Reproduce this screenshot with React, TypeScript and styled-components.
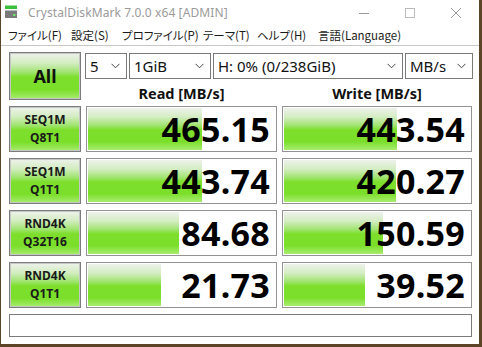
import React from "react";
import styled, { createGlobalStyle } from "styled-components";

const Global = createGlobalStyle`
  html, body { margin: 0; padding: 0; background: #5e4426; }
  body { width: 482px; height: 347px; overflow: hidden; }
  * { box-sizing: border-box; }
`;

const Window = styled.div`
  margin-left: 1px;
  width: 478px;
  height: 344px;
  background: #ffffff;
  display: flex;
  flex-direction: column;
  font-family: "Noto Sans", "Noto Sans CJK JP", sans-serif;
`;

const TitleBar = styled.div`
  height: 25px;
  display: flex;
  align-items: center;
  padding-left: 3px;
`;

const TitleText = styled.span`
  margin-left: 6px;
  font-size: 12px;
  color: #9a9a9a;
  flex: 1;
  letter-spacing: 0.1px;
`;

const WinButtons = styled.div`
  display: flex;
  height: 100%;
`;

const WinButton = styled.div`
  width: 46px;
  height: 100%;
  display: flex;
  align-items: center;
  justify-content: center;
`;

const MenuBar = styled.div`
  height: 21px;
  display: flex;
  align-items: center;
  padding-left: 7px;
  border-bottom: 1px solid #c8c8c8;
`;

const MenuItem = styled.span<{ $w: number }>`
  width: ${(p) => p.$w}px;
  flex: none;
  font-family: "Noto Sans CJK JP", "Noto Sans", sans-serif;
  font-feature-settings: "palt";
  font-size: 11.5px;
  color: #1a1a1a;
  white-space: nowrap;
`;

const Content = styled.div`
  flex: 1;
  display: grid;
  grid-template-columns: 72px 191px 190px;
  grid-template-rows: 27px 21px repeat(4, 52px) 29px;
  column-gap: 5px;
  padding: 6px 0 0 8px;
`;

const greenFill = `linear-gradient(#eef1ec 0%, #d3edc1 22%, #9fe46e 42%, #7ddf2c 52%, #7bdf2a 80%, #a9ec70 100%)`;

const AllButton = styled.div`
  grid-row: 1 / span 2;
  grid-column: 1;
  border: 1px solid #7c7c7c;
  box-shadow: inset 0 0 0 1px #c6c6c6;
  background: ${greenFill};
  display: flex;
  align-items: center;
  justify-content: center;
  font-weight: 700;
  font-size: 18px;
  color: #111;
`;

const ComboRow = styled.div`
  grid-row: 1;
  grid-column: 2 / span 2;
  display: flex;
  gap: 2px;
  margin: 1px -1px 0 -1px;
`;

const Combo = styled.div<{ $w: number }>`
  width: ${(p) => p.$w}px;
  height: 26px;
  border: 1px solid #7a7a7a;
  background: #fff;
  display: flex;
  align-items: center;
  padding: 0 6px 0 4px;
  font-size: 15px;
  color: #111;
  white-space: nowrap;
`;

const ComboText = styled.span`
  flex: 1;
  overflow: hidden;
`;

const Header = styled.div<{ $col: number }>`
  grid-row: 2;
  grid-column: ${(p) => p.$col};
  display: flex;
  align-items: flex-end;
  justify-content: center;
  font-weight: 700;
  font-size: 14.5px;
  color: #111;
  line-height: 1;
  padding-bottom: 0;
`;

const Label = styled.div<{ $row: number }>`
  grid-row: ${(p) => p.$row};
  grid-column: 1;
  margin-top: 6px;
  border: 1px solid #7c7c7c;
  box-shadow: inset 0 0 0 1px #c6c6c6;
  background: ${greenFill};
  display: flex;
  flex-direction: column;
  align-items: center;
  justify-content: center;
  font-weight: 700;
  font-size: 12px;
  line-height: 18px;
  color: #1a1a1a;
`;

const ValueBox = styled.div<{ $row: number; $col: number }>`
  grid-row: ${(p) => p.$row};
  grid-column: ${(p) => p.$col};
  margin-top: 6px;
  position: relative;
  border: 1px solid #939393;
  background: #fff;
  padding: 1px;
  display: flex;
`;

const Bar = styled.div`
  height: 100%;
  background: ${greenFill};
`;

const Value = styled.span`
  position: absolute;
  right: 6px;
  top: 0;
  bottom: 0;
  display: flex;
  align-items: center;
  font-weight: 700;
  font-size: 34px;
  color: #000;
  letter-spacing: 0.3px;
`;

const Status = styled.div`
  grid-row: 7;
  grid-column: 1 / span 3;
  margin-top: 6px;
  height: 23px;
  border: 1px solid #7a7a7a;
  background: #fff;
`;

const Chevron = () => (
  <svg width="9" height="6" viewBox="0 0 9 6">
    <path d="M0.5 0.8 L4.5 4.8 L8.5 0.8" fill="none" stroke="#444" strokeWidth="1" />
  </svg>
);

const AppIcon = () => (
  <svg width="18" height="18" viewBox="0 0 18 18">
    <rect x="1" y="1.5" width="12" height="3.5" fill="#3cbf3c" />
    <rect x="1" y="6.5" width="12" height="7.5" fill="#7a7a7a" />
    <rect x="9" y="10" width="2.5" height="2" fill="#6ee06e" />
  </svg>
);

const rows = [
  { l1: "SEQ1M", l2: "Q8T1", r: 465.15, w: 443.54 },
  { l1: "SEQ1M", l2: "Q1T1", r: 443.74, w: 420.27 },
  { l1: "RND4K", l2: "Q32T16", r: 84.68, w: 150.59 },
  { l1: "RND4K", l2: "Q1T1", r: 21.73, w: 39.52 },
];

const pct = (v: number) => Math.max(0, Math.min(100, (Math.log10(v * 10) / 6) * 100));

export default function App() {
  return (
    <>
      <Global />
      <Window>
        <TitleBar>
          <AppIcon />
          <TitleText>CrystalDiskMark 7.0.0 x64 [ADMIN]</TitleText>
          <WinButtons>
            <WinButton>
              <svg width="10" height="10" viewBox="0 0 10 10">
                <path d="M0 5.5 H10" stroke="#999" strokeWidth="1" />
              </svg>
            </WinButton>
            <WinButton>
              <svg width="10" height="10" viewBox="0 0 10 10">
                <rect x="0.5" y="0.5" width="9" height="9" fill="none" stroke="#bbb" strokeWidth="1" />
              </svg>
            </WinButton>
            <WinButton>
              <svg width="10" height="10" viewBox="0 0 10 10">
                <path d="M0 0 L10 10 M10 0 L0 10" stroke="#999" strokeWidth="1" />
              </svg>
            </WinButton>
          </WinButtons>
        </TitleBar>
        <MenuBar>
          <MenuItem $w={63}>ファイル(F)</MenuItem>
          <MenuItem $w={51}>設定(S)</MenuItem>
          <MenuItem $w={81}>プロファイル(P)</MenuItem>
          <MenuItem $w={54}>テーマ(T)</MenuItem>
          <MenuItem $w={61}>ヘルプ(H)</MenuItem>
          <MenuItem $w={90}>言語(Language)</MenuItem>
        </MenuBar>
        <Content>
          <AllButton>All</AllButton>
          <ComboRow>
            <Combo $w={42}>
              <ComboText>5</ComboText>
              <Chevron />
            </Combo>
            <Combo $w={82}>
              <ComboText>1GiB</ComboText>
              <Chevron />
            </Combo>
            <Combo $w={190}>
              <ComboText>H: 0% (0/238GiB)</ComboText>
              <Chevron />
            </Combo>
            <Combo $w={68}>
              <ComboText>MB/s</ComboText>
              <Chevron />
            </Combo>
          </ComboRow>
          <Header $col={2}>Read [MB/s]</Header>
          <Header $col={3}>Write [MB/s]</Header>
          {rows.map((r, i) => (
            <React.Fragment key={i}>
              <Label $row={i + 3}>
                <span>{r.l1}</span>
                <span>{r.l2}</span>
              </Label>
              <ValueBox $row={i + 3} $col={2}>
                <Bar style={{ width: `${pct(r.r)}%` }} />
                <Value>{r.r.toFixed(2)}</Value>
              </ValueBox>
              <ValueBox $row={i + 3} $col={3}>
                <Bar style={{ width: `${pct(r.w)}%` }} />
                <Value>{r.w.toFixed(2)}</Value>
              </ValueBox>
            </React.Fragment>
          ))}
          <Status />
        </Content>
      </Window>
    </>
  );
}
